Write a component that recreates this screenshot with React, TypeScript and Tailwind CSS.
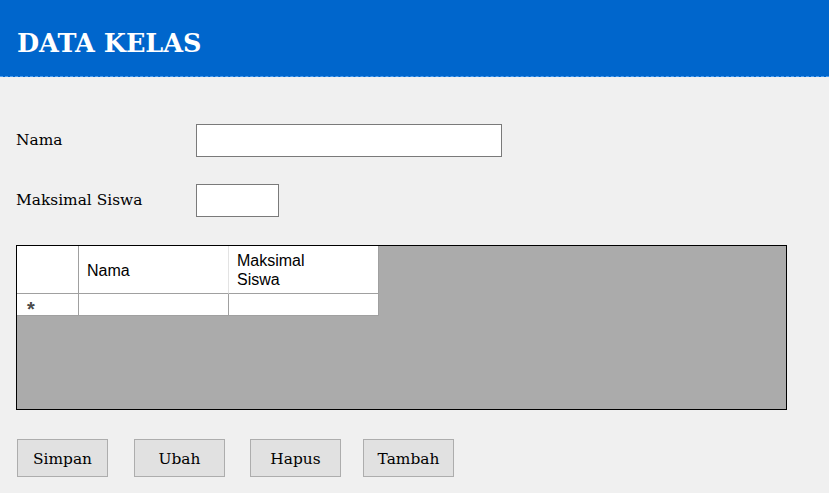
export default function App() {
  const serif = "font-['DejaVu_Serif',serif]";
  const sans = "font-['Liberation_Sans',Arial,sans-serif]";

  return (
    <div className={`w-[829px] h-[493px] bg-[#f0f0f0] overflow-hidden ${serif}`}>
      {/* header */}
      <div className="h-[77px] bg-[#0066cc] border-b border-dashed border-[#4d9ef0] pl-[17px] pt-[28px]">
        <h1 className="text-[25.5px] leading-[30px] font-bold text-white">DATA KELAS</h1>
      </div>

      <div className="pl-[16px]">
        {/* form */}
        <div className="mt-[47px] flex items-center">
          <label className="w-[180px] text-[15.4px] text-black">Nama</label>
          <input className="w-[306px] h-[33px] bg-white border border-[#7a7a7a] outline-none" />
        </div>
        <div className="mt-[27px] flex items-center">
          <label className="w-[180px] text-[15.4px] text-black">Maksimal Siswa</label>
          <input className="w-[83px] h-[33px] bg-white border border-[#7a7a7a] outline-none" />
        </div>

        {/* grid */}
        <div className={`mt-[28px] w-[771px] h-[165px] border border-black bg-[#ababab] ${sans}`}>
          <div className="flex">
            <div className="w-[62px] h-[48px] bg-white border-r border-b border-[#a0a0a0]" />
            <div className="w-[150px] h-[48px] bg-white border-r border-r-[#e3e3e3] border-b border-b-[#a0a0a0] flex items-center pl-[8px] pt-[2px] text-[16px] text-black">
              Nama
            </div>
            <div className="w-[150px] h-[48px] bg-white border-r border-b border-[#a0a0a0] pl-[8px] pt-[5px] text-[16px] leading-[19px] text-black">
              Maksimal
              <br />
              Siswa
            </div>
          </div>
          <div className="flex">
            <div className="w-[62px] h-[22px] bg-white border-r border-b border-[#a0a0a0] pl-[10px] text-[20px] font-bold text-[#4a4a4a] leading-[31px]">
              *
            </div>
            <div className="w-[150px] h-[22px] bg-white border-r border-b border-[#a0a0a0]" />
            <div className="w-[150px] h-[22px] bg-white border-r border-b border-[#a0a0a0]" />
          </div>
        </div>

        {/* buttons */}
        <div className="mt-[29px] flex">
          <button className="ml-[1px] w-[91px] h-[38px] bg-[#e1e1e1] border border-[#adadad] text-[15.4px] text-black pt-[4px]">
            Simpan
          </button>
          <button className="ml-[26px] w-[91px] h-[38px] bg-[#e1e1e1] border border-[#adadad] text-[15.4px] text-black pt-[4px]">
            Ubah
          </button>
          <button className="ml-[25px] w-[91px] h-[38px] bg-[#e1e1e1] border border-[#adadad] text-[15.4px] text-black pt-[4px]">
            Hapus
          </button>
          <button className="ml-[22px] w-[91px] h-[38px] bg-[#e1e1e1] border border-[#adadad] text-[15.4px] text-black pt-[4px]">
            Tambah
          </button>
        </div>
      </div>
    </div>
  );
}
